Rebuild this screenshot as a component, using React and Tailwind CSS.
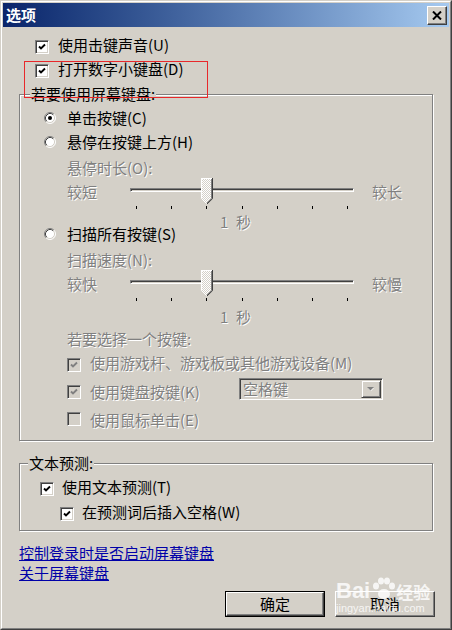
import React from 'react';

const dis = 'text-[#808080] [text-shadow:1px_1px_0_#fff]';

const Check = ({ checked, disabled }) => (
  <span
    className={`inline-flex shrink-0 items-center justify-center w-[14px] h-[14px] border border-t-[#808080] border-l-[#808080] border-b-white border-r-white shadow-[inset_1px_1px_0_#404040,inset_-1px_-1px_0_#d4d0c8] ${
      disabled ? 'bg-[#d4d0c8]' : 'bg-white'
    }`}
  >
    {checked && (
      <svg width="8" height="8" viewBox="0 0 8 8">
        <path
          d="M1 3.5 L3 5.5 L7 1.5"
          fill="none"
          stroke={disabled ? '#808080' : '#000'}
          strokeWidth="1.9"
        />
      </svg>
    )}
  </span>
);

const Radio = ({ checked }) => (
  <svg width="12" height="12" viewBox="0 0 12 12" className="shrink-0">
    <circle cx="6" cy="6" r="5" fill="#fff" />
    <path d="M2.11 9.89 A5.5 5.5 0 0 1 9.89 2.11" fill="none" stroke="#808080" />
    <path d="M9.89 2.11 A5.5 5.5 0 0 1 2.11 9.89" fill="none" stroke="#fff" />
    <path d="M2.82 9.18 A4.5 4.5 0 0 1 9.18 2.82" fill="none" stroke="#404040" />
    <path d="M9.18 2.82 A4.5 4.5 0 0 1 2.82 9.18" fill="none" stroke="#d4d0c8" />
    {checked && <circle cx="6" cy="6" r="2" fill="#000" />}
  </svg>
);

const Thumb = ({ id }) => (
  <svg width="12" height="26" viewBox="0 0 12 26">
    <defs>
      <pattern id={id} width="2" height="2" patternUnits="userSpaceOnUse">
        <rect width="2" height="2" fill="#d4d0c8" />
        <rect width="1" height="1" fill="#fff" />
        <rect x="1" y="1" width="1" height="1" fill="#fff" />
      </pattern>
    </defs>
    <polygon points="0,0 11,0 11,20 5.5,25.5 0,20" fill={`url(#${id})`} />
    <polyline points="0.5,20 0.5,0.5 10.5,0.5" fill="none" stroke="#fff" />
    <polyline points="0.5,20.5 5.5,25.5" fill="none" stroke="#fff" />
    <polyline points="10.5,1 10.5,20.5 6,25" fill="none" stroke="#808080" />
    <polyline points="11.5,0 11.5,20.7 6,26" fill="none" stroke="#404040" />
  </svg>
);

const Slider = ({ left, right, id }) => (
  <div className="flex items-start h-[36px]">
    <span className={`ml-[47px] mt-[8px] w-[63px] ${dis}`}>{left}</span>
    <div className="relative w-[224px] h-[36px]">
      <div className="mt-[12px] h-[4px] border border-t-[#808080] border-l-[#808080] border-b-white border-r-white shadow-[inset_1px_1px_0_#404040]" />
      <div className="absolute left-[71px] top-[2px]">
        <Thumb id={id} />
      </div>
      <svg width="224" height="4" viewBox="0 0 224 4" className="mt-[14px]">
        {[6, 41, 76, 112, 147, 182, 217].map(x => (
          <rect key={x} x={x} y="0" width="1" height="3" fill="#000" />
        ))}
      </svg>
    </div>
    <span className={`ml-[18px] mt-[8px] ${dis}`}>{right}</span>
  </div>
);

const Second = ({ mt }) => (
  <div className={`flex h-[16px] ${mt} ${dis}`}>
    <span className="ml-[200px] w-[16px]">1</span>
    <span>秒</span>
  </div>
);

const Button = ({ children, isDefault }) => (
  <div className={`w-[100px] h-[26px] ${isDefault ? 'border border-black' : ''}`}>
    <div className="h-full flex items-center justify-center border border-t-white border-l-white border-r-[#404040] border-b-[#404040] shadow-[inset_-1px_-1px_0_#808080]">
      {children}
    </div>
  </div>
);

export default function App() {
  return (
    <div className="relative w-[452px] h-[630px] bg-[#d4d0c8] border border-t-[#d4d0c8] border-l-[#d4d0c8] border-r-[#404040] border-b-[#404040] font-['Noto_Sans_CJK_SC',sans-serif] text-[15px] leading-[16px] text-black">
      <div className="h-full border border-t-white border-l-white border-r-[#808080] border-b-[#808080] p-px flex flex-col">
        {/* Title bar */}
        <div className="h-[24px] shrink-0 flex items-center justify-between bg-linear-to-r from-[#0a246a] to-[#a6caf0]">
          <span className="ml-[3px] text-white font-bold">选项</span>
          <div className="mr-[2px] w-[20px] h-[19px] flex items-center justify-center bg-[#d4d0c8] border border-t-white border-l-white border-r-[#404040] border-b-[#404040] shadow-[inset_-1px_-1px_0_#808080]">
            <svg width="10" height="9" viewBox="0 0 10 9">
              <path d="M1 0.5 L9 8.5 M9 0.5 L1 8.5" stroke="#000" strokeWidth="2" />
            </svg>
          </div>
        </div>

        <div className="pl-[16px] flex flex-col">
          <div className="mt-[10px] h-[16px] flex items-center">
            <span className="ml-[16px]"><Check checked /></span>
            <span className="ml-[9px]">使用击键声音(U)</span>
          </div>
          <div className="mt-[8px] h-[16px] flex items-center">
            <span className="ml-[16px]"><Check checked /></span>
            <span className="ml-[9px]">打开数字小键盘(D)</span>
          </div>

          {/* On-screen keyboard group */}
          <div className="relative mt-[17px] w-[414px] h-[347px] border border-[#808080] shadow-[inset_1px_1px_0_#fff,1px_1px_0_#fff]">
            <span className="absolute left-[10px] -top-[9px] px-px bg-[#d4d0c8]">若要使用屏幕键盘:</span>

            <div className="mt-[15px] h-[16px] flex items-center">
              <span className="ml-[24px]"><Radio checked /></span>
              <span className="ml-[11px]">单击按键(C)</span>
            </div>
            <div className="mt-[8px] h-[16px] flex items-center">
              <span className="ml-[24px]"><Radio /></span>
              <span className="ml-[11px]">悬停在按键上方(H)</span>
            </div>
            <div className={`mt-[10px] h-[16px] ml-[47px] ${dis}`}>悬停时长(O):</div>
            <Slider left="较短" right="较长" id="thumb1" />
            <Second mt="mt-[2px]" />
            <div className="-mt-[4px] h-[16px] flex items-center">
              <span className="ml-[24px]"><Radio /></span>
              <span className="ml-[11px]">扫描所有按键(S)</span>
            </div>
            <div className={`mt-[10px] h-[16px] ml-[47px] ${dis}`}>扫描速度(N):</div>
            <Slider left="较快" right="较慢" id="thumb2" />
            <Second mt="mt-[5px]" />
            <div className={`mt-[6px] h-[16px] ml-[47px] ${dis}`}>若要选择一个按键:</div>

            <div className="mt-[8px] h-[16px] flex items-center">
              <span className="ml-[47px]"><Check checked disabled /></span>
              <span className={`ml-[9px] ${dis}`}>使用游戏杆、游戏板或其他游戏设备(M)</span>
            </div>
            <div className="mt-[7px] h-[22px] flex items-start">
              <div className="mt-[6px] w-[172px] h-[16px] ml-[47px] flex items-center">
                <Check checked disabled />
                <span className={`ml-[9px] ${dis}`}>使用键盘按键(K)</span>
              </div>
              <div className="w-[144px] h-[22px] flex items-center border border-t-[#808080] border-l-[#808080] border-b-white border-r-white shadow-[inset_1px_1px_0_#404040,inset_-1px_-1px_0_#d4d0c8]">
                <span className={`ml-[3px] ${dis}`}>空格键</span>
                <div className="ml-auto mr-[1px] w-[20px] h-[18px] flex items-center justify-center border border-t-[#d4d0c8] border-l-[#d4d0c8] border-r-[#404040] border-b-[#404040] shadow-[inset_1px_1px_0_#fff,inset_-1px_-1px_0_#808080]">
                  <svg width="8" height="5" viewBox="0 0 8 5">
                    <path d="M1 1 L7 1 L4 4 Z" fill="#fff" />
                    <path d="M0 0 L7 0 L3.5 3.5 Z" fill="#808080" />
                  </svg>
                </div>
              </div>
            </div>
            <div className="mt-[12px] h-[16px] flex items-center">
              <span className="ml-[47px]"><Check disabled /></span>
              <span className={`ml-[9px] ${dis}`}>使用鼠标单击(E)</span>
            </div>
          </div>

          {/* Text prediction group */}
          <div className="relative mt-[22px] w-[414px] h-[68px] border border-[#808080] shadow-[inset_1px_1px_0_#fff,1px_1px_0_#fff]">
            <span className="absolute left-[8px] -top-[9px] px-px bg-[#d4d0c8]">文本预测:</span>
            <div className="mt-[15px] h-[16px] flex items-center">
              <span className="ml-[20px]"><Check checked /></span>
              <span className="ml-[8px]">使用文本预测(T)</span>
            </div>
            <div className="mt-[9px] h-[16px] flex items-center">
              <span className="ml-[40px]"><Check checked /></span>
              <span className="ml-[8px]">在预测词后插入空格(W)</span>
            </div>
          </div>

          <a className="mt-[14px] h-[16px] w-fit text-[#0000a8] underline">控制登录时是否启动屏幕键盘</a>
          <a className="mt-[4px] h-[16px] w-fit text-[#0000a8] underline">关于屏幕键盘</a>

          <div className="mt-[10px] mr-[14px] flex justify-end gap-[10px]">
            <Button isDefault>确定</Button>
            <Button>取消</Button>
          </div>
        </div>
      </div>

      {/* annotation */}
      <div className="absolute left-[23px] top-[60px] w-[184px] h-[37px] border border-[#e8282b]" />

      {/* watermark */}
      <div className="absolute left-[335px] top-[576px] text-white opacity-80 pointer-events-none">
        <div className="flex items-end">
          <span className="font-['Liberation_Sans',sans-serif] font-bold text-[22px] leading-[22px]">Bai</span>
          <svg width="26" height="24" viewBox="0 0 26 24" className="mb-[1px]">
            <ellipse cx="6" cy="9" rx="3" ry="3.5" fill="#fff" />
            <ellipse cx="11" cy="4" rx="3" ry="3.5" fill="#fff" />
            <ellipse cx="17" cy="4" rx="3" ry="3.5" fill="#fff" />
            <ellipse cx="22" cy="9" rx="3" ry="3.5" fill="#fff" />
            <ellipse cx="14" cy="17" rx="6" ry="5" fill="#fff" />
          </svg>
          <span className="font-bold text-[17px] leading-[20px]">经验</span>
        </div>
        <div className="font-['Liberation_Sans',sans-serif] text-[11px] leading-[12px]">jingyan.baidu.com</div>
      </div>
    </div>
  );
}
